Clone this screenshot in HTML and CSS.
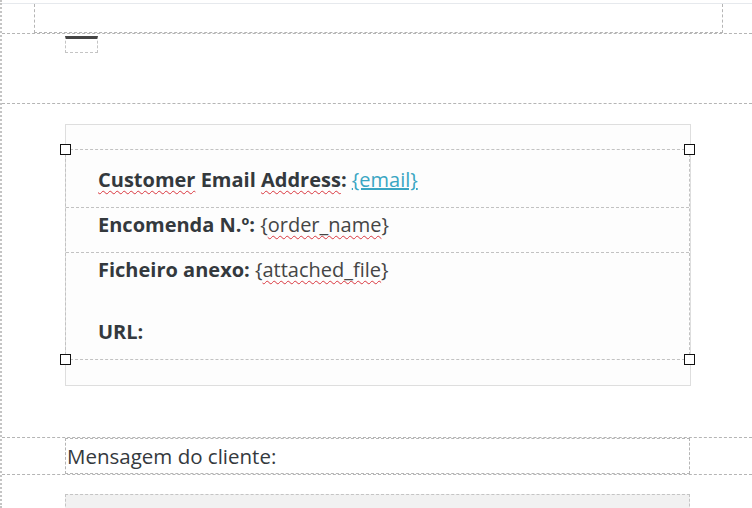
FILE: index.html
```html
<!DOCTYPE html>
<html lang="en">
<head>
    <meta charset="UTF-8">
    <title>Email template editor</title>
    <link rel="stylesheet" href="styles.css">
</head>
<body>
    <div class="editor">
        <div class="section section-top">
            <div class="top-box"></div>
        </div>
        <div class="section section-divider">
            <div class="divider-box"></div>
        </div>
        <div class="section section-main">
            <div class="card">
                <div class="fields">
                    <span class="handle handle-tl"></span>
                    <span class="handle handle-tr"></span>
                    <span class="handle handle-bl"></span>
                    <span class="handle handle-br"></span>
                    <div class="field field-first">
                        <strong><span class="typo">Customer</span> Email <span class="typo">Address</span>:</strong>
                        <a href="#" class="tag-link">{email}</a>
                    </div>
                    <div class="field">
                        <strong>Encomenda N.º:</strong> <span class="tag">{<span class="typo">order_name</span>}</span>
                    </div>
                    <div class="field field-last">
                        <strong>Ficheiro anexo:</strong> <span class="tag">{<span class="typo">attached_file</span>}</span>
                        <br><br>
                        <strong>URL:</strong>
                    </div>
                </div>
            </div>
        </div>
        <div class="section section-message">
            <div class="message-box">Mensagem do cliente:</div>
        </div>
        <div class="section section-bottom">
            <div class="gray-box"></div>
        </div>
    </div>
</body>
</html>
```

FILE: styles.css
```css
body {
    margin: 0;
    background: #fff;
    font-family: 'Open Sans', 'Noto Sans', sans-serif;
    color: #333;
}
.editor {
    height: 508px;
    box-sizing: border-box;
    padding-top: 3px;
    overflow: hidden;
    border-left: 2px dotted #c4c4c4;
}
.section {
    border-bottom: 1px dashed #b5b5b5;
}
.section-top {
    height: 29px;
    border-top: 1px solid #e6e9ed;
}
.top-box {
    height: 28px;
    margin: 0 29px 0 32px;
    border: 1px dashed #b5b5b5;
    border-top: none;
}
.section-divider {
    height: 67px;
    padding-top: 2px;
}
.divider-box {
    width: 31px;
    height: 13px;
    margin-left: 63px;
    border: 1px dashed #c4c4c4;
    border-top: 3px solid #454545;
}
.section-main {
    height: 333px;
    padding-top: 20px;
    box-sizing: border-box;
    border-bottom: none;
}
.card {
    width: 624px;
    margin-left: 63px;
    padding: 24px 0 25px;
    border: 1px solid #dedede;
    background: #fdfdfd;
}
.fields {
    position: relative;
    border: 1px dashed #c2c2c2;
    margin-left: -1px;
    font-size: 20px;
    line-height: 31px;
    color: #34393d;
}
.field {
    padding: 1px 32px 12px;
    border-bottom: 1px dashed #c2c2c2;
}
.field-first {
    padding-top: 14px;
}
.field-last {
    border-bottom: none;
}
.field strong {
    font-weight: 700;
}
.tag {
    color: #454545;
}
.tag-link {
    color: #3aa6c3;
    text-decoration: underline;
}
.typo {
    text-decoration: underline wavy #d9363e;
    text-decoration-thickness: 1px;
    text-underline-offset: 3px;
}
.handle {
    position: absolute;
    width: 9px;
    height: 9px;
    background: #fff;
    border: 1px solid #111;
}
.handle-tl { left: -6px; top: -6px; }
.handle-tr { right: -6px; top: -6px; }
.handle-bl { left: -6px; bottom: -6px; }
.handle-br { right: -6px; bottom: -6px; }
.section-message {
    height: 36px;
    border-top: 1px dashed #b5b5b5;
}
.message-box {
    width: 622px;
    height: 34px;
    margin-left: 63px;
    border: 1px dashed #b5b5b5;
    padding-left: 1px;
    font-size: 20.5px;
    line-height: 34px;
    color: #34393d;
}
.section-bottom {
    border-bottom: none;
    padding-top: 19px;
}
.gray-box {
    width: 623px;
    height: 40px;
    margin-left: 63px;
    background: #f1f1f1;
    border: 1px dashed #c4c4c4;
    border-bottom: none;
}
```
